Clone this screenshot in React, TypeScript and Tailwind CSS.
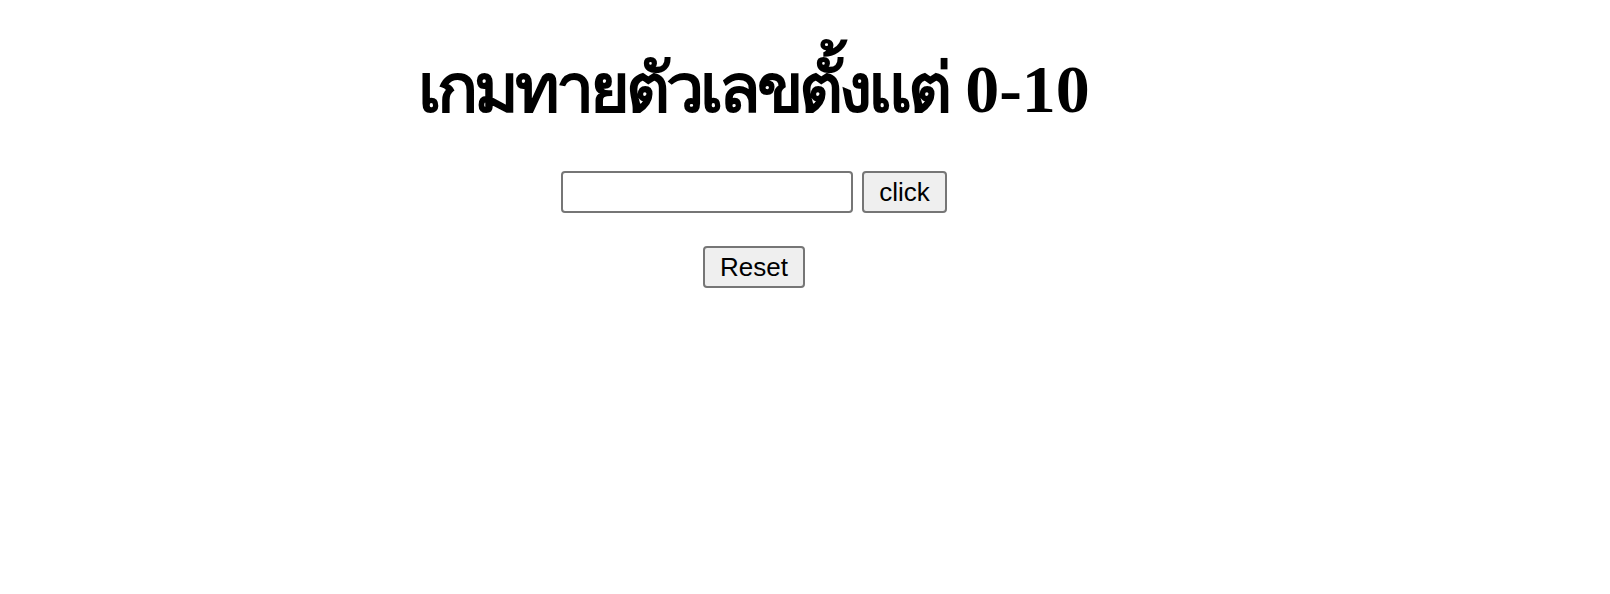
export default function App() {
  return (
    <div className="w-[1508px] pt-[49px] text-center text-black font-['Liberation_Serif',serif]">
      <h1 className="text-[68px] font-bold leading-[80px]">
        <span className="tracking-[-4px]">เกมทายตัวเลขตั้งแต่</span> 0-10
      </h1>
      <div className="mt-[42px] flex flex-col items-center gap-[33px] font-['Liberation_Sans',Arial,sans-serif] text-[26px]">
        <div className="flex items-center gap-[9px]">
          <input
            type="text"
            className="w-[292px] h-[42px] rounded-[4px] border-2 border-[#767676] bg-white px-2 outline-none"
          />
          <button className="h-[42px] rounded-[4px] border-2 border-[#767676] bg-[#efefef] px-[15px] leading-[30px]">
            click
          </button>
        </div>
        <button className="h-[42px] rounded-[4px] border-2 border-[#767676] bg-[#efefef] px-[15px] leading-[30px]">
          Reset
        </button>
      </div>
    </div>
  );
}
